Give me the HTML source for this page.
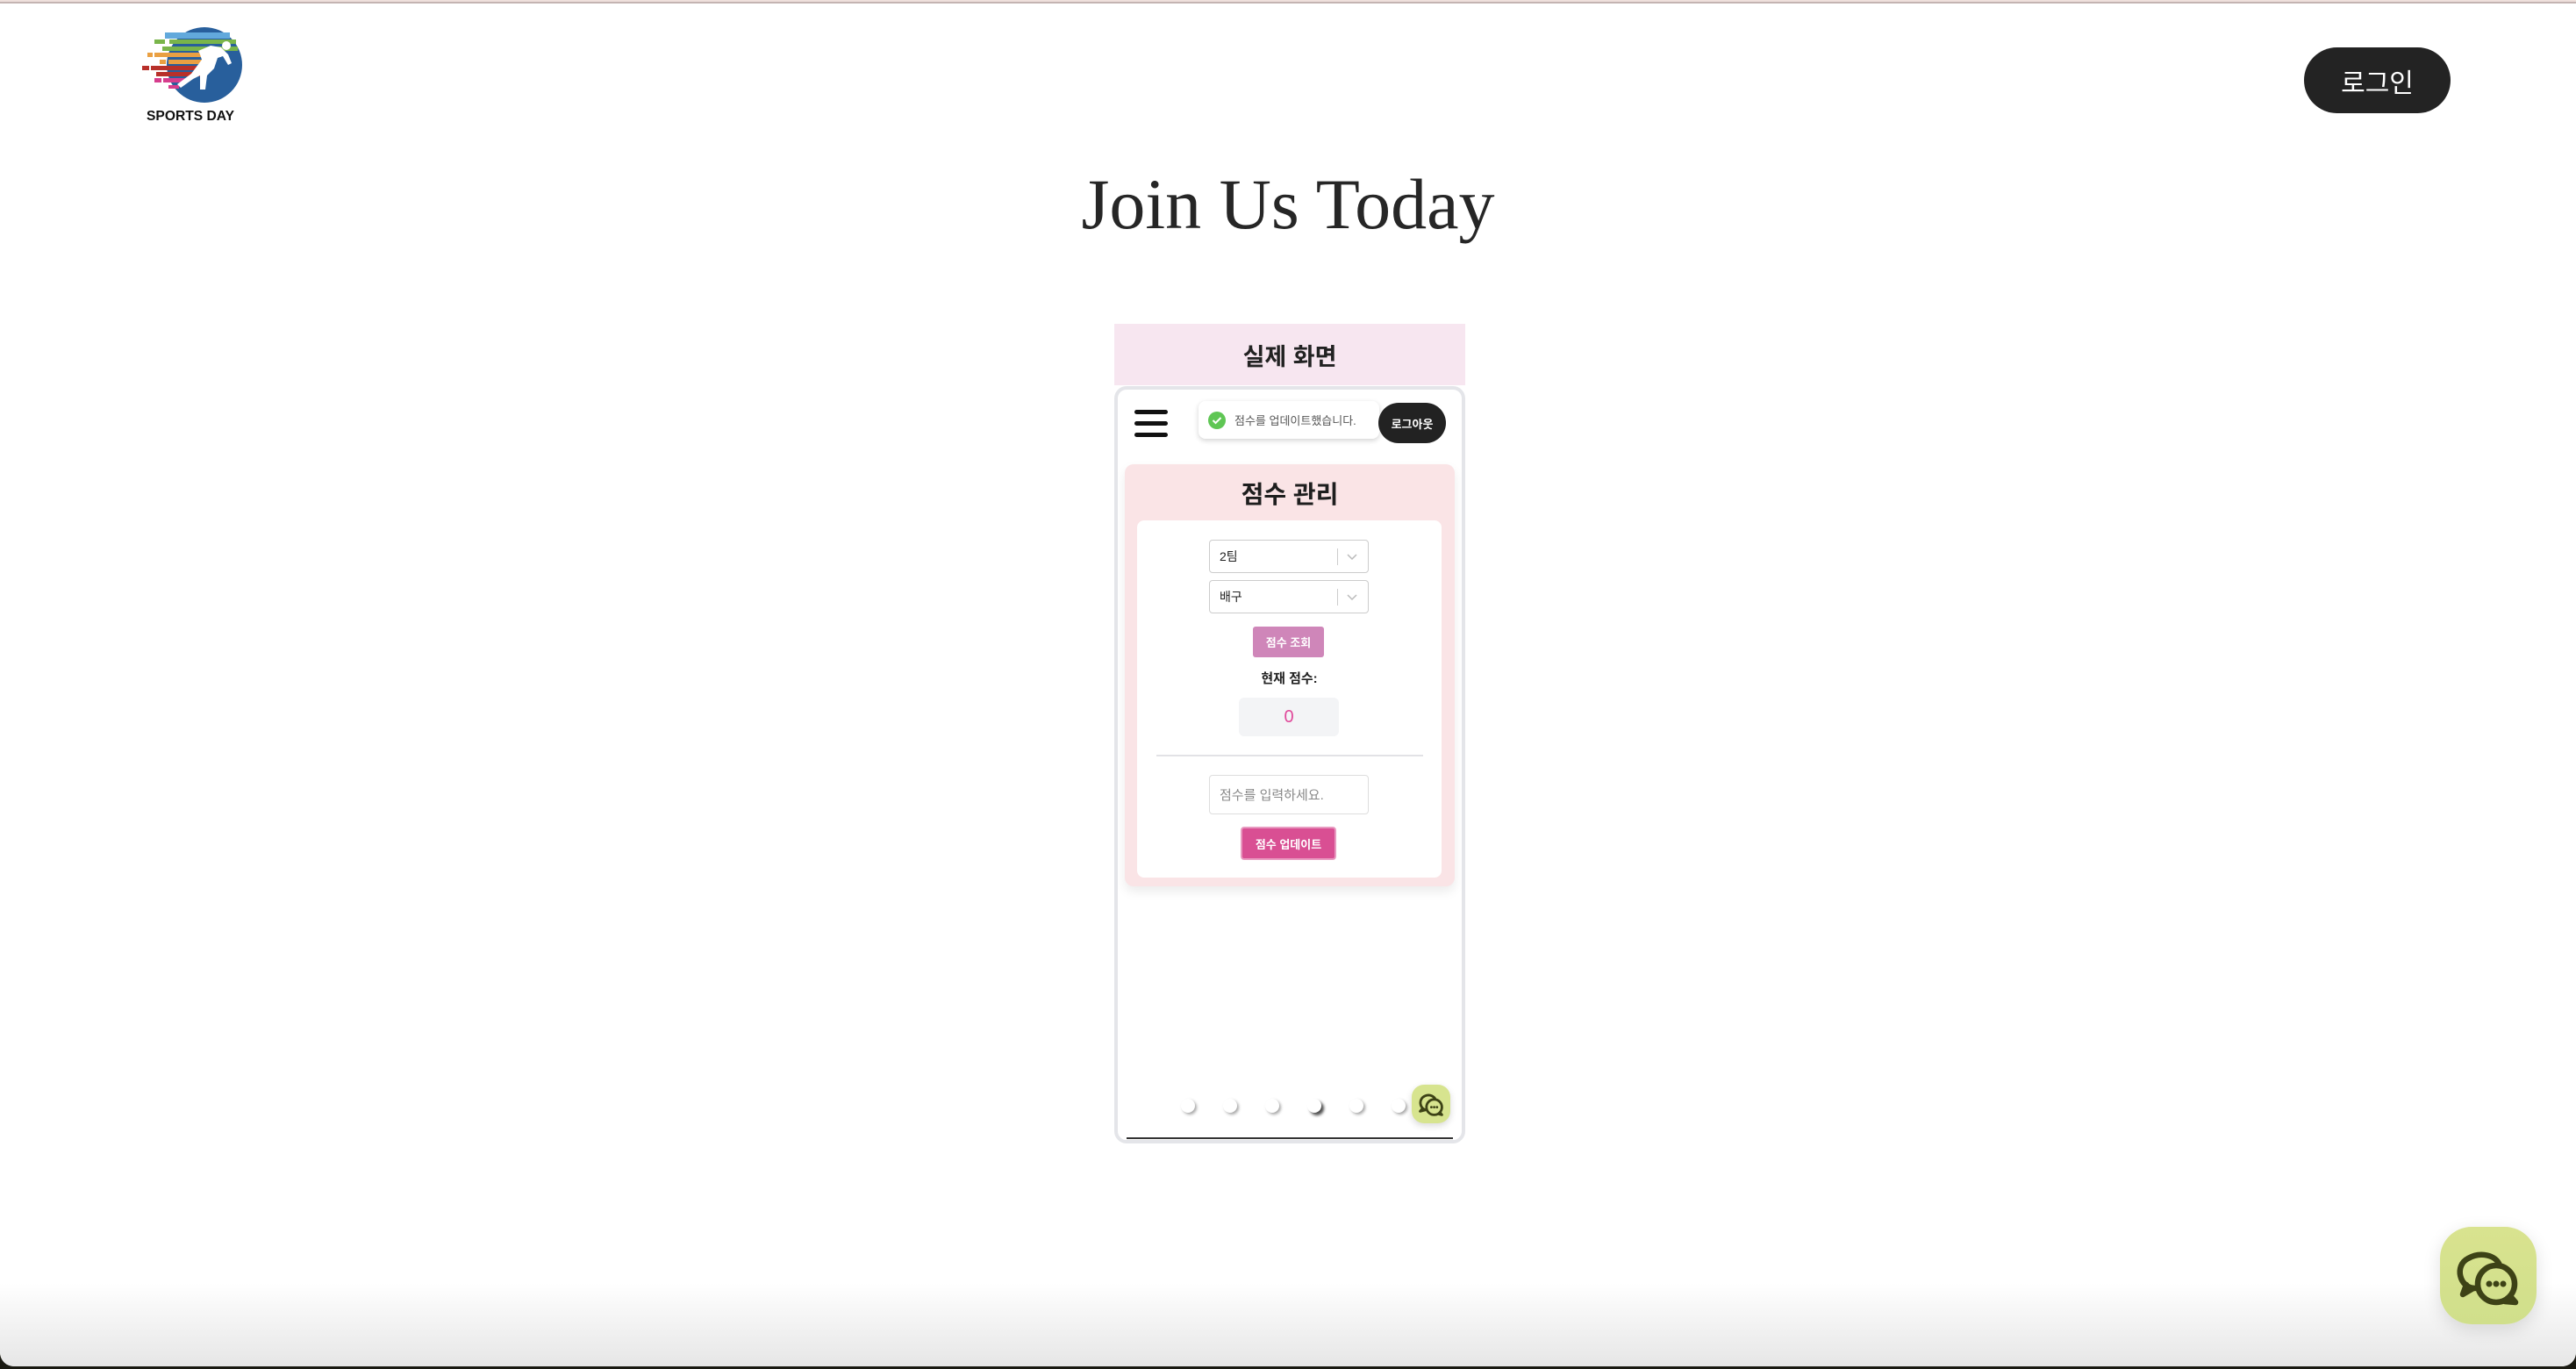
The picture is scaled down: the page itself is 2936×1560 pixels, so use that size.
<!DOCTYPE html>
<html><head><meta charset="utf-8">
<style>
*{margin:0;padding:0;box-sizing:border-box}
html,body{width:2936px;height:1560px;overflow:hidden;background:#1a1a12}
body{font-family:"Liberation Sans","Noto Sans CJK KR",sans-serif;position:relative}
.win{position:absolute;left:0;top:0;width:2936px;height:1557px;background:#fff;border-radius:0 0 16px 16px;overflow:hidden}
.topbar{position:absolute;left:0;top:0;width:100%;height:4px;background:#efe0dc;border-bottom:2px solid #c4b4b2}
.fade{position:absolute;left:0;bottom:0;width:100%;height:95px;background:linear-gradient(#fff,#e6e6e6)}
.abs{position:absolute}
.login{left:2626px;top:54px;width:167px;height:75px;border-radius:38px;background:#232323;color:#fff;font-size:30px;display:flex;align-items:center;justify-content:center}
h1{position:absolute;left:0;width:2936px;top:186px;text-align:center;font-family:"Liberation Serif","Noto Serif CJK SC",serif;font-weight:400;font-size:82px;color:#262626}
.phead{left:1270px;top:369px;width:400px;height:70px;background:#f7e6f0;font-size:27px;font-weight:700;color:#222;display:flex;align-items:center;justify-content:center}
.phone{left:1270px;top:440px;width:400px;height:863px;border:4px solid #e4e5e9;border-radius:14px;background:#fff;overflow:hidden}
.btxt{color:#fff;font-weight:700;font-size:13px;display:flex;align-items:center;justify-content:center}
.sel{width:182px;height:38px;border:1.5px solid #ccc;border-radius:4px;background:#fff;font-size:14px;color:#222;padding-left:11px;display:flex;align-items:center}
.sel .sep{position:absolute;left:145px;top:9px;width:1px;height:19px;background:#ccc}
.dot{width:16px;height:16px;border-radius:50%;background:#fff;box-shadow:2px 2px 3px rgba(0,0,0,.35)}
</style></head><body>
<div class="win">
<div class="topbar"></div>
<div class="fade"></div>

<svg class="abs" style="left:150px;top:25px" width="140" height="120" viewBox="150 25 140 120">
<circle cx="233" cy="74" r="43" fill="#285f9c"/>
<rect x="188" y="37" width="74" height="7" fill="#62a9dc"/>
<rect x="176" y="45" width="12" height="5" fill="#79b54a"/><rect x="193" y="45" width="76" height="5" fill="#79b54a"/>
<rect x="185" y="53" width="86" height="5" fill="#79b54a"/>
<rect x="168" y="60" width="6" height="5" fill="#eaa042"/><rect x="176" y="60" width="76" height="5" fill="#eaa042"/>
<rect x="182" y="68" width="7" height="5" fill="#eaa042"/><rect x="192" y="68" width="48" height="5" fill="#eaa042"/>
<rect x="162" y="75" width="8" height="5" fill="#b8302a"/><rect x="172" y="75" width="60" height="5" fill="#b8302a"/>
<rect x="178" y="82" width="50" height="5" fill="#b8302a"/>
<rect x="176" y="89" width="8" height="5" fill="#d63d8d"/><rect x="186" y="89" width="28" height="5" fill="#d63d8d"/>
<rect x="192" y="97" width="12" height="4" fill="#d63d8d"/>
<path d="M226 58 L240 52 L252 54 L260 62 L264 72 L260 74 L254 64 L248 66 L244 78 L236 86 L234 102 L228 102 L228 86 L220 90 L206 100 L202 96 L218 84 L230 68 L228 62 Z" fill="#fff"/>
<circle cx="258" cy="52" r="5" fill="#fff"/>
<text x="167" y="137" textLength="100" lengthAdjust="spacingAndGlyphs" font-family="Liberation Sans,sans-serif" font-weight="700" font-size="16" fill="#111">SPORTS DAY</text>
</svg>

<div class="abs login">로그인</div>
<h1>Join Us Today</h1>

<div class="abs phead">실제 화면</div>
<div class="abs phone">
 <div class="abs" style="left:19px;top:23px;width:38px">
  <div style="height:5px;background:#111;border-radius:3px;margin-bottom:8px"></div>
  <div style="height:5px;background:#111;border-radius:3px;margin-bottom:8px"></div>
  <div style="height:5px;background:#111;border-radius:3px"></div>
 </div>
 <div class="abs" style="left:92px;top:13px;width:206px;height:43px;background:#fff;border-radius:8px;box-shadow:0 2px 6px rgba(0,0,0,.18);display:flex;align-items:center;padding-left:11px;font-size:13px;color:#555">
  <span style="width:20px;height:20px;border-radius:50%;background:#5fc654;display:inline-flex;align-items:center;justify-content:center;margin-right:10px"><svg width="12" height="10" viewBox="0 0 12 10"><path d="M1.5 5 L4.5 8 L10.5 2" stroke="#fff" stroke-width="2" fill="none"/></svg></span>점수를 업데이트했습니다.
 </div>
 <div class="abs btxt" style="left:297px;top:15px;width:77px;height:46px;border-radius:23px;background:#222;font-size:13px">로그아웃</div>

 <div class="abs" style="left:8px;top:85px;width:376px;height:481px;background:#fae4e6;border-radius:10px;box-shadow:0 6px 12px rgba(0,0,0,.08)">
  <div class="abs" style="left:0;top:16px;width:376px;text-align:center;font-size:28px;line-height:38px;font-weight:700;color:#1e1e1e">점수 관리</div>
  <div class="abs" style="left:14px;top:64px;width:347px;height:407px;background:#fff;border-radius:8px">
   <div class="abs sel" style="left:82px;top:22px">2팀<span class="sep"></span><svg class="abs" style="left:155px;top:14px" width="14" height="9" viewBox="0 0 14 9"><path d="M2 2 L7 7 L12 2" stroke="#bbb" stroke-width="1.5" fill="none"/></svg></div>
   <div class="abs sel" style="left:82px;top:68px">배구<span class="sep"></span><svg class="abs" style="left:155px;top:14px" width="14" height="9" viewBox="0 0 14 9"><path d="M2 2 L7 7 L12 2" stroke="#bbb" stroke-width="1.5" fill="none"/></svg></div>
   <div class="abs btxt" style="left:132px;top:121px;width:81px;height:35px;background:#cf86b9;border-radius:3px">점수 조회</div>
   <div class="abs" style="left:0;top:171px;width:347px;text-align:center;font-size:15px;line-height:20px;font-weight:700;color:#222">현재 점수:</div>
   <div class="abs" style="left:116px;top:202px;width:114px;height:44px;background:#f3f4f6;border-radius:6px;color:#e0489a;font-size:20px;display:flex;align-items:center;justify-content:center">0</div>
   <div class="abs" style="left:22px;top:267px;width:304px;height:2px;background:#e2e2e6"></div>
   <div class="abs sel" style="left:82px;top:290px;height:45px;color:#888;font-size:15px;border-color:#ddd">점수를 입력하세요.</div>
   <div class="abs btxt" style="left:118px;top:349px;width:109px;height:38px;background:#d94f93;border:2px solid #e89ac0;border-radius:4px">점수 업데이트</div>
  </div>
 </div>

 <div class="abs dot" style="left:72px;top:808px"></div>
 <div class="abs dot" style="left:120px;top:808px"></div>
 <div class="abs dot" style="left:168px;top:808px"></div>
 <div class="abs dot" style="left:216px;top:808px;box-shadow:3px 3px 3px rgba(0,0,0,.7)"></div>
 <div class="abs dot" style="left:264px;top:808px"></div>
 <div class="abs dot" style="left:312px;top:808px"></div>
 <div class="abs" style="left:335px;top:792px;width:44px;height:44px;border-radius:14px;background:#d7e48f;box-shadow:0 3px 8px rgba(0,0,0,.15)">
  <svg width="44" height="44" viewBox="0 0 110 110"><g fill="none" stroke="#3d4216" stroke-width="7" stroke-linejoin="round"><path d="M42 72 C22 70 18 40 38 32 C52 26 66 34 68 44"/><path d="M32 66 L24 76 L40 72"/><circle cx="64" cy="64" r="22"/><path d="M80 78 L86 86 L74 83"/></g><g fill="#3d4216"><circle cx="56" cy="64" r="3.5"/><circle cx="64" cy="64" r="3.5"/><circle cx="72" cy="64" r="3.5"/></g></svg>
 </div>
 <div class="abs" style="left:10px;top:852px;width:372px;height:2px;background:#333"></div>
</div>

<div class="abs" style="left:2781px;top:1398px;width:110px;height:111px;border-radius:36px;background:linear-gradient(#d9e38f,#d0df8b);box-shadow:0 6px 20px rgba(0,0,0,.12)">
 <svg width="110" height="110" viewBox="0 0 110 110"><g fill="none" stroke="#3d4216" stroke-width="6.5" stroke-linejoin="round" stroke-linecap="round"><path d="M40 70 C22 70 16 44 32 36 C46 28 64 32 68 44"/><path d="M30 66 L26 77 L38 70"/><circle cx="64" cy="65" r="21"/><path d="M80 79 L86 86 L74 85"/></g><g fill="#3d4216"><circle cx="56" cy="65" r="3.5"/><circle cx="64" cy="65" r="3.5"/><circle cx="72" cy="65" r="3.5"/></g></svg>
</div>
</div>
</body></html>
